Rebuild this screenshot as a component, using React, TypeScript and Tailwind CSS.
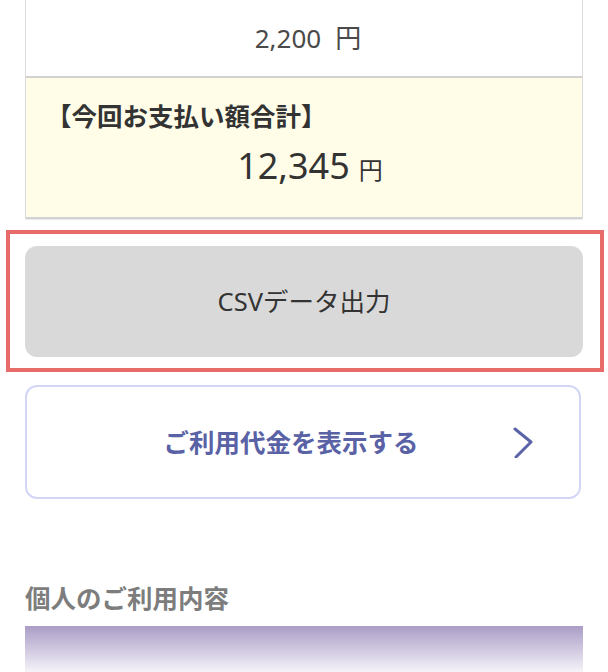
const font = "font-['Noto_Sans','Noto_Sans_CJK_JP',sans-serif]";

function ChevronRight() {
  return (
    <svg width="24" height="32" viewBox="0 0 24 32" fill="none" className="shrink-0">
      <polyline
        points="4,3 20,16 5,31"
        stroke="#5c64a8"
        strokeWidth="3"
        strokeLinecap="round"
        strokeLinejoin="round"
      />
    </svg>
  );
}

export default function App() {
  const handleCsv = () => {
    console.log("CSV export clicked");
  };

  const handleShowCharges = () => {
    console.log("Show charges clicked");
  };

  return (
    <div className={`min-h-[672px] w-[608px] overflow-hidden bg-white ${font}`}>
      <div className="px-[25px]">
        {/* Payment summary card */}
        <div className="border-x border-[#dcdcdc]">
          <div className="flex h-[76px] items-center justify-center pl-[8px] text-[26px] text-[#4a4a4a]">
            <span>2,200</span>
            <span className="ml-[14px]">円</span>
          </div>
          <div className="border-t-2 border-b-2 border-[#d2d2d2] bg-[#fffde8] pl-[20px] pr-4 pt-[22px] pb-[33px] shadow-[0_1px_1px_rgba(0,0,0,0.08)]">
            <p className="text-[25.5px] font-bold leading-8 text-[#333]">【今回お支払い額合計】</p>
            <p className="mt-4 flex items-baseline justify-center pl-[8px] text-[#333]">
              <span className="text-[36px] leading-none">12,345</span>
              <span className="ml-[9px] text-[24px] leading-none">円</span>
            </p>
          </div>
        </div>

        {/* CSV button, highlighted */}
        <div className="relative mt-[27px]">
          <button
            onClick={handleCsv}
            className="flex h-[111px] w-full items-center justify-center rounded-[12px] bg-[#d9d9d9] text-[25.5px] text-[#333]"
          >
            CSVデータ出力
          </button>
          <div className="pointer-events-none absolute -left-[19px] -right-[21px] -top-[16px] -bottom-[15px] border-4 border-[#e86b6b]" />
        </div>

        {/* Show charges button */}
        <button
          onClick={handleShowCharges}
          className="mt-[28px] flex h-[114px] w-[556px] items-center rounded-[12px] border-2 border-[#d3d7f6] bg-white px-11"
        >
          <span className="flex-1 text-center text-[25.5px] font-bold text-[#5a62a6]">
            ご利用代金を表示する
          </span>
          <ChevronRight />
        </button>

        {/* Personal usage */}
        <h2 className="mt-[83px] text-[25.5px] font-bold leading-8 text-[#7d7d7d]">個人のご利用内容</h2>
        <div className="mt-3 h-[52px] bg-gradient-to-b from-[#ab9dc6] to-white" />
      </div>
    </div>
  );
}
